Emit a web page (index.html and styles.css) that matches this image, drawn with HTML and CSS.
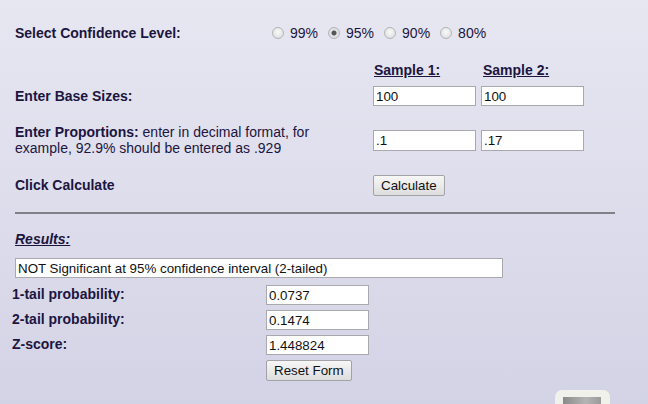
FILE: index.html
```html
<!DOCTYPE html>
<html lang="en">
<head>
    <meta charset="UTF-8">
    <title>Significance Test Calculator</title>
    <link rel="stylesheet" href="styles.css">
</head>
<body>
    <form class="calc">
        <div class="row row-level">
            <div class="label label-level">Select Confidence Level:</div>
            <label class="opt"><input type="radio" name="level" value="99"> 99%</label>
            <label class="opt"><input type="radio" name="level" value="95" checked> 95%</label>
            <label class="opt"><input type="radio" name="level" value="90"> 90%</label>
            <label class="opt"><input type="radio" name="level" value="80"> 80%</label>
        </div>

        <div class="row row-head">
            <div class="label"></div>
            <div class="col-head">Sample 1:</div>
            <div class="col-head">Sample 2:</div>
        </div>

        <div class="row row-base">
            <div class="label">Enter Base Sizes:</div>
            <input class="field" type="text" value="100">
            <input class="field" type="text" value="100">
        </div>

        <div class="row row-prop">
            <div class="label"><b>Enter Proportions:</b> <span class="note">enter in decimal format, for</span><br><span class="note">example, 92.9% should be entered as .929</span></div>
            <input class="field" type="text" value=".1">
            <input class="field" type="text" value=".17">
        </div>

        <div class="row row-calc">
            <div class="label">Click Calculate</div>
            <button type="button" class="btn">Calculate</button>
        </div>

        <hr class="divider">

        <div class="results">
            <div class="results-title">Results:</div>
            <input class="field field-wide" type="text" value="NOT Significant at 95% confidence interval (2-tailed)">
            <div class="res-row">
                <div class="res-label">1-tail probability:</div>
                <input class="field" type="text" value="0.0737">
            </div>
            <div class="res-row">
                <div class="res-label">2-tail probability:</div>
                <input class="field" type="text" value="0.1474">
            </div>
            <div class="res-row">
                <div class="res-label">Z-score:</div>
                <input class="field" type="text" value="1.448824">
            </div>
            <div class="res-row">
                <div class="res-label"></div>
                <button type="button" class="btn btn-reset">Reset Form</button>
            </div>
        </div>
    </form>

    <div class="to-top"><div class="to-top-inner"></div></div>
</body>
</html>
```

FILE: styles.css
```css
html, body {
    height: 100%;
}
body {
    margin: 0;
    background: linear-gradient(#e7e7f2, #d3d3e6);
    font-family: "Liberation Sans", Arial, sans-serif;
    font-size: 14px;
    color: #1c1540;
    overflow: hidden;
    position: relative;
}
.calc {
    padding-top: 20px;
}
.row {
    display: flex;
    align-items: center;
    padding-left: 15px;
}
.label {
    width: 358px;
    flex: none;
    font-weight: bold;
}
.row-level {
    height: 26px;
}
.label-level {
    width: 257px;
}
.opt {
    display: flex;
    align-items: center;
    margin-right: 10px;
}
.opt input {
    -webkit-appearance: none;
    appearance: none;
    width: 12px;
    height: 12px;
    margin: 0 6px 0 0;
    border: 1px solid #b4b4b8;
    border-radius: 50%;
    background: radial-gradient(circle at 50% 40%, #fafafa, #d8d8dc);
    box-sizing: border-box;
}
.opt input:checked {
    background: radial-gradient(circle, #555 0, #555 2px, #e4e4e8 3px, #d4d4d8);
}
.row-head {
    height: 20px;
    margin-top: 14px;
}
.col-head {
    width: 103px;
    margin-right: 5px;
    padding-left: 1px;
    font-weight: bold;
    text-decoration: underline;
}
.row-base {
    height: 24px;
    margin-top: 4px;
}
.field {
    width: 103px;
    height: 20px;
    margin: 0 5px 0 0;
    padding: 0 2px;
    box-sizing: border-box;
    border: 1px solid #a9a9ad;
    background: #fff;
    font-family: "Liberation Sans", Arial, sans-serif;
    font-size: 13.33px;
    color: #111;
}
.row-prop {
    height: 36px;
    margin-top: 14px;
}
.row-prop .field {
    height: 21px;
}
.row-prop .label {
    width: 343px;
    margin-right: 15px;
    line-height: 16px;
}
.note {
    font-weight: normal;
}
.row-calc {
    height: 22px;
    margin-top: 16px;
}
.btn {
    height: 21px;
    padding: 0 7px;
    border: 1px solid #a3a3a7;
    border-radius: 2px;
    background: linear-gradient(#f7f7f7, #dddddd);
    font-family: "Liberation Sans", Arial, sans-serif;
    font-size: 13.33px;
    color: #111;
}
.divider {
    margin: 16px 33px 0 15px;
    height: 2px;
    border: none;
    background: #808088;
}
.results {
    padding: 17px 0 0 15px;
}
.results-title {
    font-weight: bold;
    font-style: italic;
    text-decoration: underline;
    height: 16px;
}
.field-wide {
    display: block;
    width: 488px;
    margin-top: 11px;
}
.res-row {
    display: flex;
    align-items: flex-start;
    height: 20px;
    margin-left: -3px;
    margin-top: 5px;
}
.field-wide + .res-row {
    margin-top: 7px;
}
.res-label {
    width: 254px;
    flex: none;
    font-weight: bold;
    line-height: 16px;
    padding-top: 1px;
}
.to-top {
    position: absolute;
    left: 555px;
    top: 390px;
    width: 55px;
    height: 30px;
    border-radius: 7px;
    background: #f1f1ec;
}
.to-top-inner {
    margin: 7px 0 0 8px;
    width: 38px;
    height: 20px;
    background: linear-gradient(90deg, #8a8a8a, #b5b5b5 60%, #9a9a9a);
}
```
